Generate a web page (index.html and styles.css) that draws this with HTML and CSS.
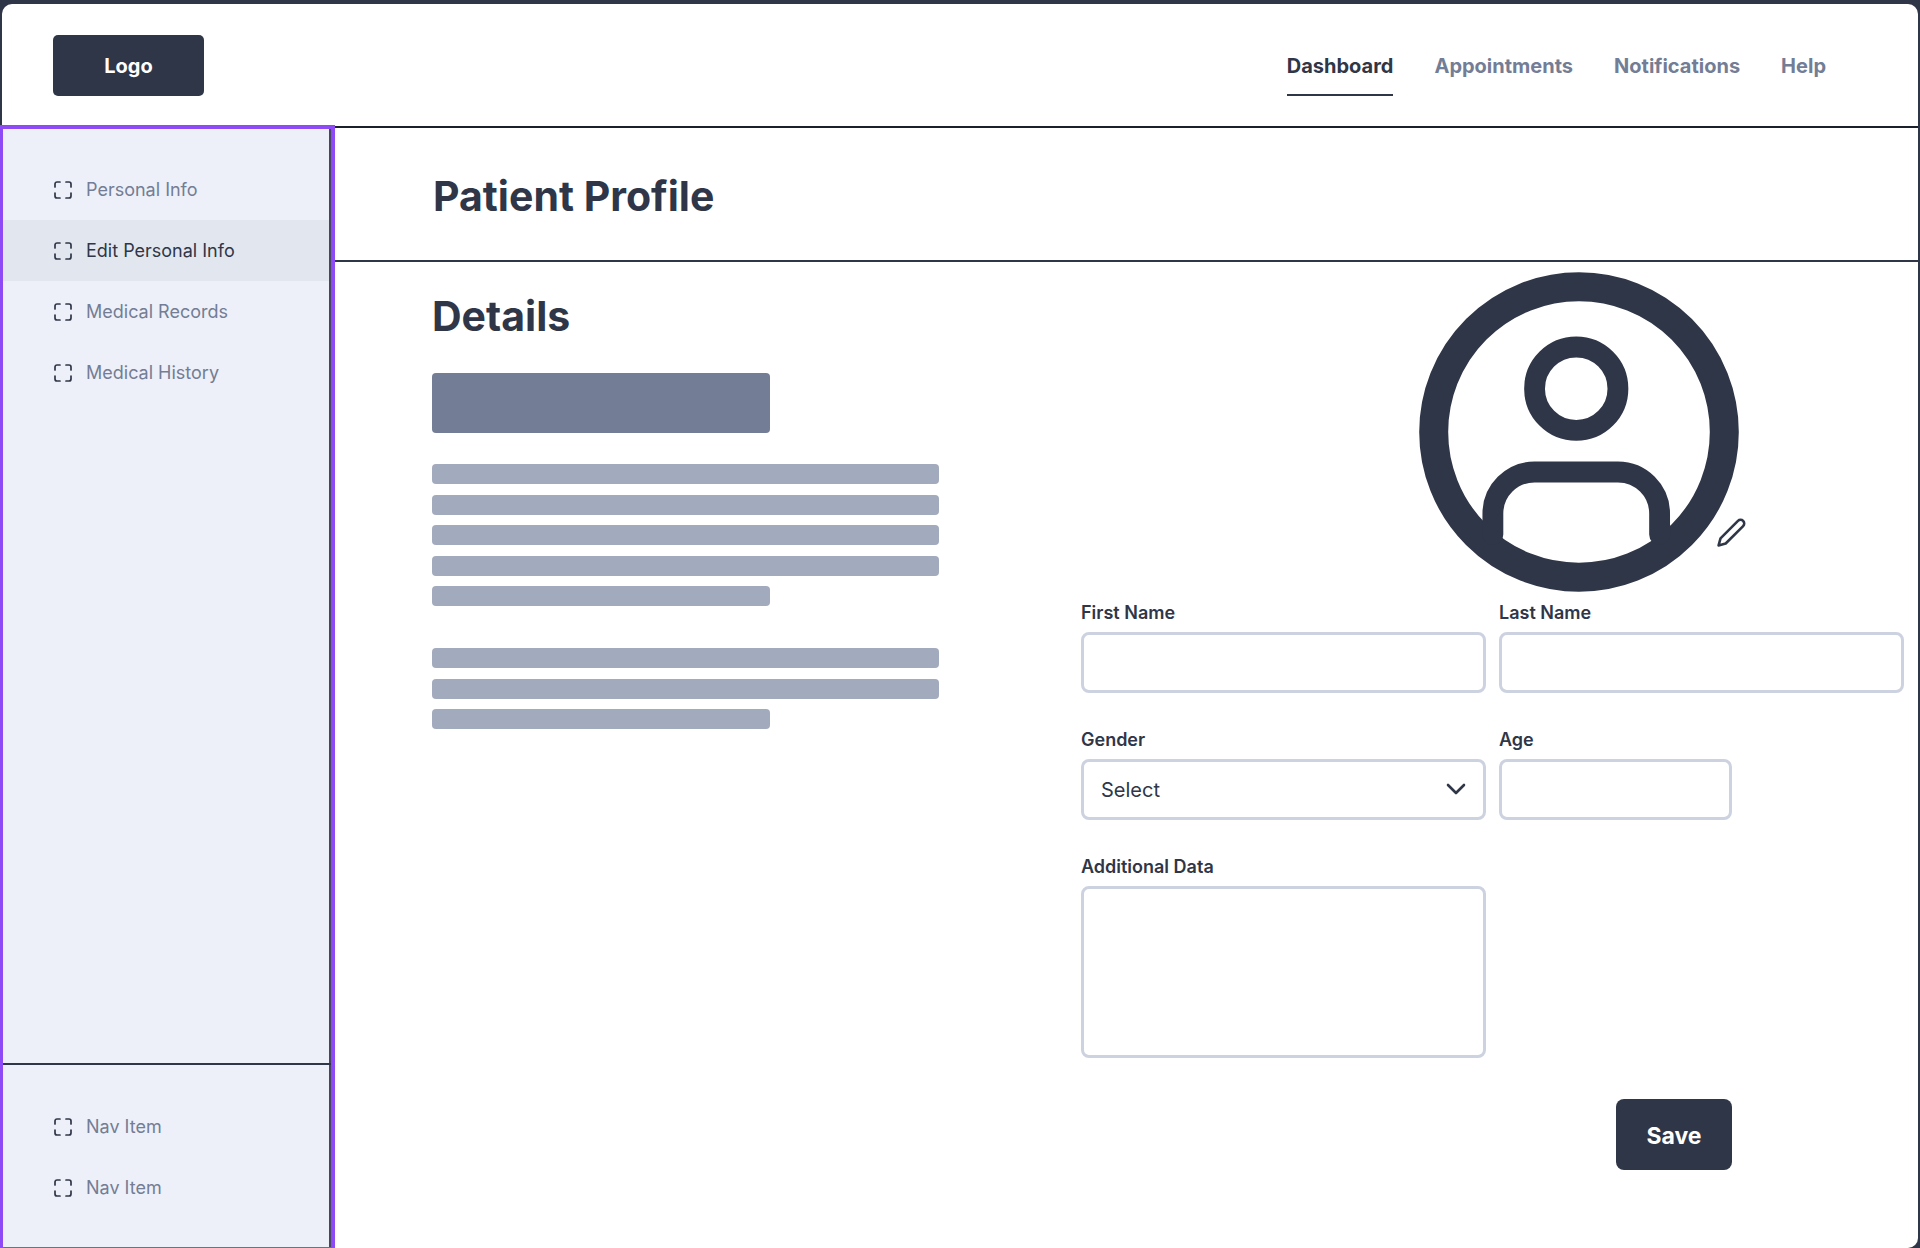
FILE: index.html
```html
<!DOCTYPE html>
<html lang="en">
<head>
<meta charset="utf-8">
<title>Patient Profile</title>
<link rel="stylesheet" href="styles.css">
</head>
<body>
<svg class="sprite" aria-hidden="true">
  <symbol id="frame" viewBox="0 0 18 18">
    <path d="M6 1H3a2 2 0 0 0-2 2v3M12 1h3a2 2 0 0 1 2 2v3M6 17H3a2 2 0 0 1-2-2v-3M12 17h3a2 2 0 0 0 2-2v-3" fill="none" stroke="currentColor" stroke-width="1.7" stroke-linecap="round"/>
  </symbol>
</svg>
<div class="app">
  <header class="topbar">
    <a class="logo" href="#">Logo</a>
    <nav class="topnav" aria-label="Main">
      <a class="topnav-link is-current" href="#" aria-current="page">Dashboard</a>
      <a class="topnav-link" href="#">Appointments</a>
      <a class="topnav-link" href="#">Notifications</a>
      <a class="topnav-link" href="#">Help</a>
    </nav>
  </header>
  <div class="body">
    <aside class="sidebar">
      <nav class="sidenav" aria-label="Patient">
        <a class="sidenav-link" href="#"><svg class="icon"><use href="#frame"/></svg>Personal Info</a>
        <a class="sidenav-link is-current" href="#" aria-current="page"><svg class="icon"><use href="#frame"/></svg>Edit Personal Info</a>
        <a class="sidenav-link" href="#"><svg class="icon"><use href="#frame"/></svg>Medical Records</a>
        <a class="sidenav-link" href="#"><svg class="icon"><use href="#frame"/></svg>Medical History</a>
      </nav>
      <nav class="sidenav sidenav-foot" aria-label="Secondary">
        <a class="sidenav-link" href="#"><svg class="icon"><use href="#frame"/></svg>Nav Item</a>
        <a class="sidenav-link" href="#"><svg class="icon"><use href="#frame"/></svg>Nav Item</a>
      </nav>
    </aside>
    <main class="main">
      <div class="page-head"><h1 class="title">Patient Profile</h1></div>
      <div class="content">
        <section class="details">
          <h2 class="title">Details</h2>
          <div class="block"></div>
          <div class="lines lines-long">
            <div class="line"></div><div class="line"></div><div class="line"></div><div class="line"></div><div class="line line-short"></div>
          </div>
          <div class="lines lines-brief">
            <div class="line"></div><div class="line"></div><div class="line line-short"></div>
          </div>
        </section>
        <form class="form">
          <div class="avatar">
            <svg class="avatar-art" viewBox="0 0 320 320" fill="none" stroke="currentColor">
              <circle cx="160" cy="160" r="145.3" stroke-width="29"/>
              <g transform="translate(32.2 43.7) scale(10.42)" stroke-width="2" stroke-linecap="round">
                <circle cx="12" cy="7" r="4"/>
                <path d="M20 21v-2a4 4 0 0 0-4-4H8a4 4 0 0 0-4 4v2"/>
              </g>
            </svg>
            <button class="edit" type="button" aria-label="Edit photo">
              <svg class="edit-icon" viewBox="0 0 24 24" fill="none" stroke="currentColor" stroke-width="2" stroke-linejoin="round"><path d="M17 3a2.828 2.828 0 1 1 4 4L7.5 20.5 2 22l1.5-5.5L17 3z"/></svg>
            </button>
          </div>
          <div class="field">
            <label class="label" for="first">First Name</label>
            <input class="control" id="first" type="text">
          </div>
          <div class="field">
            <label class="label" for="last">Last Name</label>
            <input class="control" id="last" type="text">
          </div>
          <div class="field">
            <label class="label" for="gender">Gender</label>
            <div class="select">
              <select class="control" id="gender"><option>Select</option></select>
              <svg class="chevron" viewBox="0 0 20 12" fill="none" stroke="currentColor" stroke-width="2.6" stroke-linecap="round" stroke-linejoin="round"><path d="M2 2l8 8 8-8"/></svg>
            </div>
          </div>
          <div class="field field-age">
            <label class="label" for="age">Age</label>
            <input class="control" id="age" type="text">
          </div>
          <div class="field">
            <label class="label" for="more">Additional Data</label>
            <textarea class="control control-area" id="more"></textarea>
          </div>
          <div class="actions"><button class="save" type="submit">Save</button></div>
        </form>
      </div>
    </main>
  </div>
</div>
</body>
</html>
```
FILE: styles.css
```css
:root {
  --ink: #2f3647;
  --muted: #737d95;
  --soft: #a2aabd;
  --rule: #cdd2e0;
  --panel: #edf0f8;
  --accent: #8e4af5;
}
* { box-sizing: border-box; }
body {
  margin: 0;
  background: var(--ink);
  color: var(--ink);
  font-family: Inter, "Liberation Sans", sans-serif;
}
a { color: inherit; text-decoration: none; }
.sprite { position: absolute; width: 0; height: 0; }
.app {
  display: flex;
  flex-direction: column;
  min-height: 100vh;
  padding-top: 4px;
}
.topbar {
  display: flex;
  align-items: center;
  justify-content: space-between;
  height: 124px;
  margin: 0 2px;
  padding: 0 92px 0 51px;
  border-bottom: 2px solid #1a202c;
  background: #fff;
  border-radius: 10px 10px 0 0;
}
.logo {
  width: 151px;
  height: 61px;
  border-radius: 5px;
  background: var(--ink);
  color: #fff;
  font-size: 20px;
  font-weight: 700;
  line-height: 62px;
  text-align: center;
}
.topnav { display: flex; gap: 41px; }
.topnav-link {
  padding: 17px 0 13px;
  border-bottom: 2px solid transparent;
  color: var(--muted);
  font-size: 20px;
  font-weight: 700;
  line-height: 30px;
}
.topnav-link.is-current { color: var(--ink); border-color: var(--ink); }
.body { display: flex; flex: 1; }
.sidebar {
  display: flex;
  flex-direction: column;
  justify-content: space-between;
  width: 335px;
  margin-top: -3px;
  position: relative;
  border: solid var(--accent);
  border-width: 4px 4px 1px 3px;
  background: var(--panel);
  box-shadow: inset -2px 0 #4a4568;
}
.sidenav { padding: 30px 2px 29px 0; }
.sidenav-foot { padding: 31px 2px 29px 0; border-top: 2px solid var(--ink); }
.sidenav-link {
  display: flex;
  align-items: center;
  gap: 14px;
  height: 61px;
  padding-left: 51px;
  color: var(--muted);
  font-size: 18px;
}
.sidenav-link.is-current { background: #e2e7ef; color: var(--ink); }
.icon { width: 18px; height: 18px; color: var(--ink); }
.main {
  flex: 1;
  margin-right: 2px;
  background: #fff;
  border-radius: 0 0 10px 0;
}
.title {
  margin: 0;
  font-size: 41px;
  font-weight: 700;
  line-height: 50px;
}
.page-head {
  height: 134px;
  padding: 43px 98px 0;
  border-bottom: 2px solid var(--ink);
}
.content {
  display: flex;
  justify-content: space-between;
  gap: 40px;
  padding: 0 14px 0 97px;
}
.details { flex: 0 1 507px; padding-top: 29px; }
.block {
  width: 66.7%;
  height: 60px;
  margin: 32px 0 31px;
  border-radius: 4px;
  background: var(--muted);
}
.lines {
  display: flex;
  flex-direction: column;
  justify-content: space-between;
  margin-bottom: 42px;
}
.lines-long { height: 142px; }
.lines-brief { height: 81px; }
.line { height: 20px; border-radius: 4px; background: var(--soft); }
.line-short { width: 66.7%; }
.form {
  display: grid;
  grid-template-columns: 1fr 1fr;
  column-gap: 13px;
  row-gap: 30px;
  flex: 0 1 823px;
  align-content: start;
  padding-top: 10px;
}
.avatar {
  position: relative;
  grid-column: 1 / -1;
  justify-self: end;
  width: 320px;
  height: 320px;
  margin: 0 165px -26px 0;
}
.avatar-art { display: block; width: 320px; height: 320px; }
.edit {
  position: absolute;
  right: -8px;
  bottom: 44px;
  padding: 0;
  border: 0;
  background: none;
  color: inherit;
}
.edit-icon { display: block; width: 31px; height: 31px; }
.label {
  display: block;
  height: 36px;
  padding-top: 4px;
  font-size: 18px;
  font-weight: 600;
  line-height: 26px;
}
.control {
  display: block;
  width: 100%;
  height: 61px;
  padding: 0 17px;
  border: 3px solid var(--rule);
  border-radius: 8px;
  background: #fff;
  color: var(--ink);
  font: 20px Inter, "Liberation Sans", sans-serif;
  appearance: none;
}
.control-area { height: 172px; padding: 16px 17px; resize: none; }
.field-age { width: 233px; }
.select { position: relative; }
.chevron {
  position: absolute;
  top: 24px;
  right: 20px;
  width: 20px;
  height: 12px;
  pointer-events: none;
}
.actions { grid-column: 1 / -1; padding: 11px 172px 76px 0; text-align: right; }
.save {
  width: 116px;
  height: 71px;
  padding: 2px 0 0;
  border: 0;
  border-radius: 8px;
  background: var(--ink);
  color: #fff;
  font: 700 23px Inter, "Liberation Sans", sans-serif;
}
```
